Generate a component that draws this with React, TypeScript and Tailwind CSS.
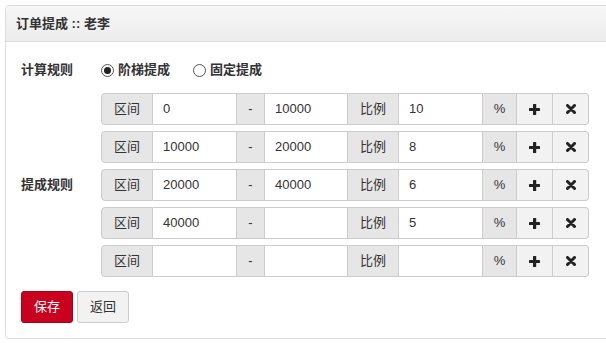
import React from "react";

const font = { fontFamily: '"Liberation Sans", "Noto Sans CJK SC", sans-serif' };

type Row = { from: string; to: string; rate: string };

const rows: Row[] = [
  { from: "0", to: "10000", rate: "10" },
  { from: "10000", to: "20000", rate: "8" },
  { from: "20000", to: "40000", rate: "6" },
  { from: "40000", to: "", rate: "5" },
  { from: "", to: "", rate: "" },
];

function PlusIcon() {
  return (
    <svg width="11" height="11" viewBox="0 0 11 11">
      <rect x="4" y="0" width="3.2" height="11" rx="0.6" fill="#222" />
      <rect x="0" y="3.9" width="11" height="3.2" rx="0.6" fill="#222" />
    </svg>
  );
}

function CloseIcon() {
  return (
    <svg width="10" height="10" viewBox="0 0 10 10">
      <path d="M1.5 1.5 L8.5 8.5 M8.5 1.5 L1.5 8.5" stroke="#222" strokeWidth="3" strokeLinecap="round" />
    </svg>
  );
}

function Radio({ checked, label }: { checked: boolean; label: string }) {
  return (
    <label className="flex items-center gap-[4px]">
      <span className="flex h-[13px] w-[13px] items-center justify-center rounded-full border border-[#555] bg-white">
        {checked && <span className="h-[7px] w-[7px] rounded-full bg-[#222]" />}
      </span>
      <span className="text-[13px] font-bold text-[#333]">{label}</span>
    </label>
  );
}

function RangeRow({ row }: { row: Row }) {
  const addon = "flex items-center justify-center bg-[#e6e6e6] text-[13px] text-[#333] border-[#ccc]";
  const input = "flex items-center pl-[10px] bg-white text-[13px] text-[#333] border-[#ccc]";
  return (
    <div className="flex h-[32px] w-[488px]">
      <div className={`${addon} w-[52px] border rounded-l-[4px]`}>区间</div>
      <div className={`${input} w-[83px] border-y`}>{row.from}</div>
      <div className={`${addon} w-[29px] border`}>-</div>
      <div className={`${input} w-[82px] border-y`}>{row.to}</div>
      <div className={`${addon} w-[52px] border`}>比例</div>
      <div className={`${input} w-[83px] border-y`}>{row.rate}</div>
      <div className={`${addon} w-[35px] border`}>%</div>
      <div className="flex w-[36px] items-center justify-center border-y border-r border-[#ccc] bg-[#f2f2f2]">
        <PlusIcon />
      </div>
      <div className="flex w-[36px] items-center justify-center rounded-r-[4px] border-y border-r border-[#ccc] bg-[#f2f2f2]">
        <CloseIcon />
      </div>
    </div>
  );
}

export default function App() {
  return (
    <div className="h-[343px] w-[606px] overflow-hidden bg-white" style={font}>
      <div className="ml-[5px] mt-[5px] w-[610px] rounded-[4px] border border-[#ddd] bg-white">
        <div className="flex h-[36px] items-center border-b border-[#ddd] bg-gradient-to-b from-[#f7f7f7] to-[#ececec] pl-[10px] rounded-t-[4px]">
          <span className="text-[13px] font-bold text-[#333]">订单提成 :: 老李</span>
        </div>
        <div className="pl-[15px] pt-[18px] pb-[15px]">
          <div className="flex h-[20px] items-center">
            <div className="w-[80px] text-[13px] font-bold text-[#333]">计算规则</div>
            <div className="flex items-center gap-[23px]">
              <Radio checked label="阶梯提成" />
              <Radio checked={false} label="固定提成" />
            </div>
          </div>
          <div className="mt-[13px] flex">
            <div className="flex w-[80px] items-center text-[13px] font-bold text-[#333]">提成规则</div>
            <div className="flex flex-col gap-[6px]">
              {rows.map((r, i) => (
                <RangeRow key={i} row={r} />
              ))}
            </div>
          </div>
          <div className="mt-[14px] flex gap-[4px]">
            <button className="h-[32px] w-[52px] rounded-[3px] border border-[#a80018] bg-[#c9001e] text-[13px] text-white">
              保存
            </button>
            <button className="h-[32px] w-[52px] rounded-[3px] border border-[#ccc] bg-[#f2f2f2] text-[13px] text-[#333]">
              返回
            </button>
          </div>
        </div>
      </div>
    </div>
  );
}
